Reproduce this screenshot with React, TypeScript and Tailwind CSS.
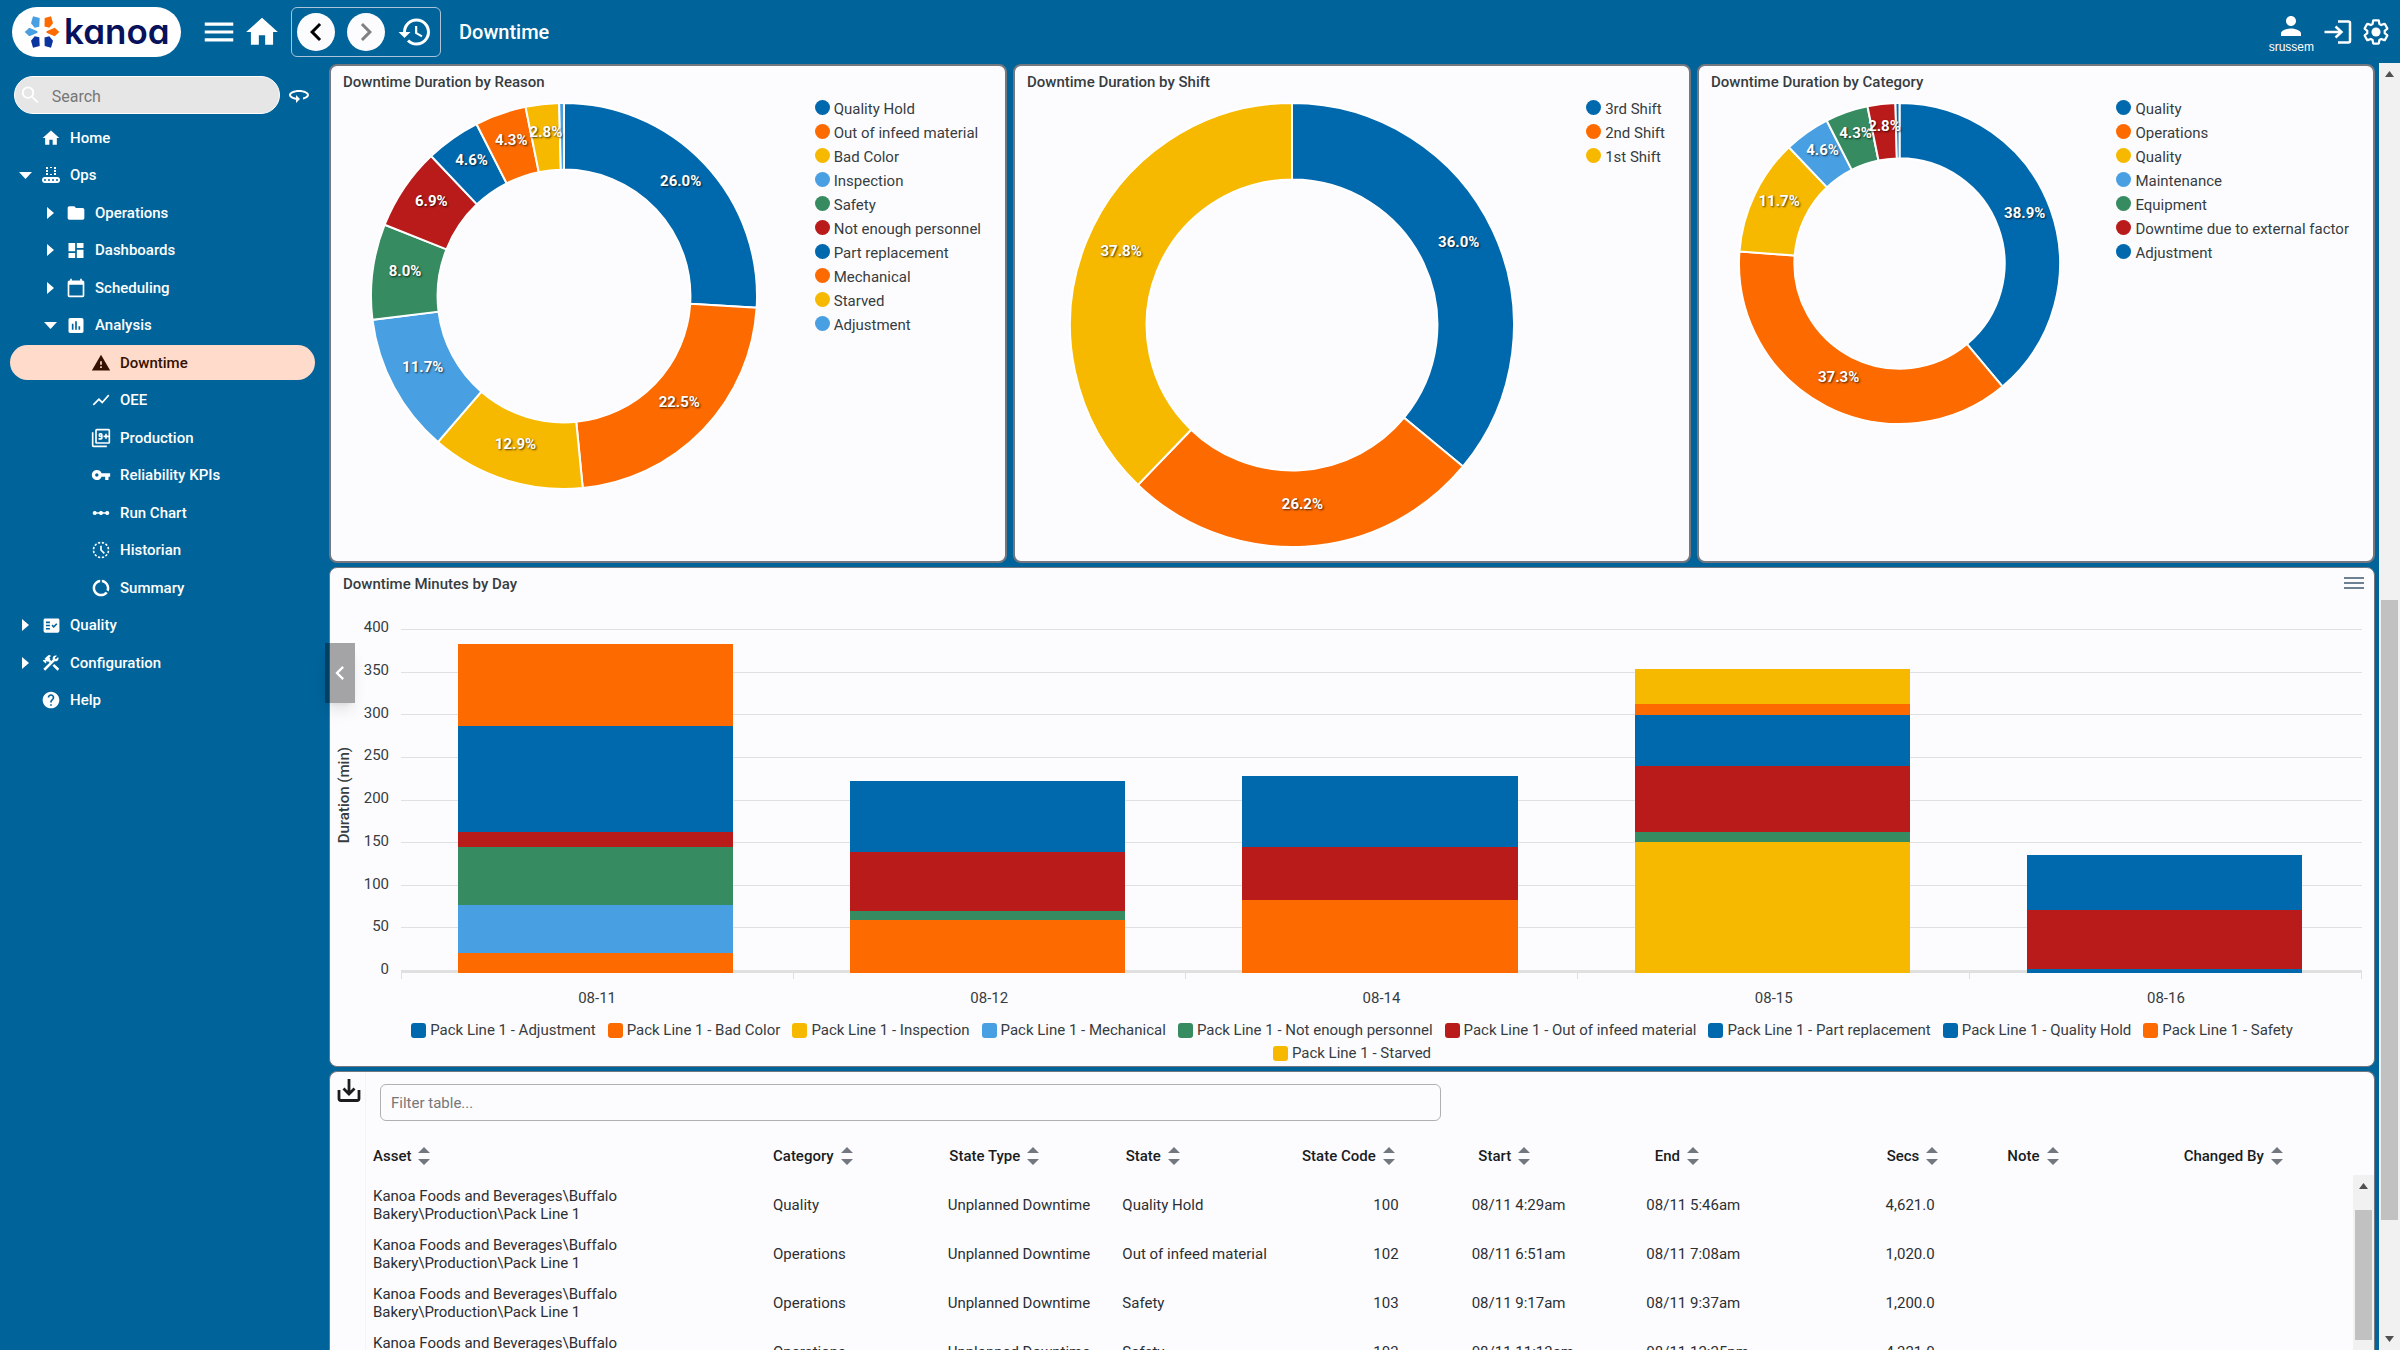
import React, { useState } from "react";
import {
  Md360,
  MdAssessment,
  MdCalendarToday,
  MdChevronLeft,
  MdConstruction,
  MdDashboard,
  MdDataUsage,
  MdFactCheck,
  MdFolder,
  MdHelp,
  MdHistory,
  MdHistoryToggleOff,
  MdHome,
  MdLinearScale,
  MdMenu,
  MdOutlineFilter9Plus,
  MdPerson,
  MdSearch,
  MdShowChart,
  MdVpnKey,
  MdWarning,
} from "react-icons/md";

const BLUE = "#0069ae";
const ORANGE = "#fc6a00";
const YELLOW = "#f7b900";
const SKY = "#489fe2";
const GREEN = "#368b61";
const RED = "#b91a1a";

interface Slice {
  label: string;
  value: number;
  color: string;
}

const reasons: Slice[] = [
  { label: "Quality Hold", value: 26.0, color: BLUE },
  { label: "Out of infeed material", value: 22.5, color: ORANGE },
  { label: "Bad Color", value: 12.9, color: YELLOW },
  { label: "Inspection", value: 11.7, color: SKY },
  { label: "Safety", value: 8.0, color: GREEN },
  { label: "Not enough personnel", value: 6.9, color: RED },
  { label: "Part replacement", value: 4.6, color: BLUE },
  { label: "Mechanical", value: 4.3, color: ORANGE },
  { label: "Starved", value: 2.8, color: YELLOW },
  { label: "Adjustment", value: 0.4, color: SKY },
];

const shifts: Slice[] = [
  { label: "3rd Shift", value: 36.0, color: BLUE },
  { label: "2nd Shift", value: 26.2, color: ORANGE },
  { label: "1st Shift", value: 37.8, color: YELLOW },
];

const categories: Slice[] = [
  { label: "Quality", value: 38.9, color: BLUE },
  { label: "Operations", value: 37.3, color: ORANGE },
  { label: "Quality", value: 11.7, color: YELLOW },
  { label: "Maintenance", value: 4.6, color: SKY },
  { label: "Equipment", value: 4.3, color: GREEN },
  { label: "Downtime due to external factor", value: 2.8, color: RED },
  { label: "Adjustment", value: 0.4, color: BLUE },
];

// minutes per day, top segment first
const days = [
  {
    day: "08-11",
    parts: [
      [ORANGE, 96.3],
      [BLUE, 123.2],
      [RED, 17.3],
      [GREEN, 67.6],
      [SKY, 56.6],
      [ORANGE, 22.9],
    ],
  },
  {
    day: "08-12",
    parts: [
      [BLUE, 83.2],
      [RED, 68.8],
      [GREEN, 10.5],
      [ORANGE, 62],
    ],
  },
  {
    day: "08-14",
    parts: [
      [BLUE, 82.5],
      [RED, 62.4],
      [ORANGE, 85],
    ],
  },
  {
    day: "08-15",
    parts: [
      [YELLOW, 40.8],
      [ORANGE, 12.8],
      [BLUE, 59.1],
      [RED, 77.3],
      [GREEN, 11.3],
      [YELLOW, 153],
    ],
  },
  {
    day: "08-16",
    parts: [
      [BLUE, 63.8],
      [RED, 69.1],
      [BLUE, 4.7],
    ],
  },
] as { day: string; parts: [string, number][] }[];

const series = [
  ["Adjustment", BLUE],
  ["Bad Color", ORANGE],
  ["Inspection", YELLOW],
  ["Mechanical", SKY],
  ["Not enough personnel", GREEN],
  ["Out of infeed material", RED],
  ["Part replacement", BLUE],
  ["Quality Hold", BLUE],
  ["Safety", ORANGE],
  ["Starved", YELLOW],
];

const ticks = [400, 350, 300, 250, 200, 150, 100, 50, 0];

const columns = [
  "Asset",
  "Category",
  "State Type",
  "State",
  "State Code",
  "Start",
  "End",
  "Secs",
  "Note",
  "Changed By",
];

const asset = "Kanoa Foods and Beverages\\Buffalo Bakery\\Production\\Pack Line 1";

const rows = [
  [asset, "Quality", "Unplanned Downtime", "Quality Hold", "100", "08/11 4:29am", "08/11 5:46am", "4,621.0", "", ""],
  [asset, "Operations", "Unplanned Downtime", "Out of infeed material", "102", "08/11 6:51am", "08/11 7:08am", "1,020.0", "", ""],
  [asset, "Operations", "Unplanned Downtime", "Safety", "103", "08/11 9:17am", "08/11 9:37am", "1,200.0", "", ""],
  [asset, "Operations", "Unplanned Downtime", "Safety", "103", "08/11 11:13am", "08/11 12:25pm", "4,321.0", "", ""],
];

const ConveyorIcon = () => (
  <svg width="18" height="18" viewBox="0 0 18 18" fill="currentColor">
    <path d="M4 1h2v2H4zM8 1h2v1H8zM12 1h2v2h-2zM4 4h2v2H4zM12 4h2v2h-2zM4 7h2v2H4zM8 8h2v1H8zM12 7h2v2h-2z" />
    <path
      fillRule="evenodd"
      d="M3 11h12a3 3 0 0 1 0 6H3a3 3 0 0 1 0-6zm0 2a1 1 0 1 0 0 2 1 1 0 0 0 0-2zm4 0a1 1 0 1 0 0 2 1 1 0 0 0 0-2zm4 0a1 1 0 1 0 0 2 1 1 0 0 0 0-2zm4 0a1 1 0 1 0 0 2 1 1 0 0 0 0-2z"
    />
  </svg>
);

const GearIcon = () => (
  <svg width="28" height="28" viewBox="0 0 24 24" fill="none">
    <path
      stroke="currentColor"
      strokeWidth="1.9"
      strokeLinejoin="round"
      d="M19.43 12.98c.04-.32.07-.64.07-.98s-.03-.66-.07-.98l2.11-1.65c.19-.15.24-.42.12-.64l-2-3.46c-.09-.16-.26-.25-.44-.25-.06 0-.12.01-.17.03l-2.49 1c-.52-.4-1.08-.73-1.69-.98l-.38-2.65C14.46 2.18 14.25 2 14 2h-4c-.25 0-.46.18-.49.42l-.38 2.65c-.61.25-1.17.59-1.69.98l-2.49-1c-.06-.02-.12-.03-.18-.03-.17 0-.34.09-.43.25l-2 3.46c-.13.22-.07.49.12.64l2.11 1.65c-.04.32-.07.65-.07.98s.03.66.07.98l-2.11 1.65c-.19.15-.24.42-.12.64l2 3.46c.09.16.26.25.44.25.06 0 .12-.01.17-.03l2.49-1c.52.4 1.08.73 1.69.98l.38 2.65c.03.24.24.42.49.42h4c.25 0 .46-.18.49-.42l.38-2.65c.61-.25 1.17-.59 1.69-.98l2.49 1c.06.02.12.03.18.03.17 0 .34-.09.43-.25l2-3.46c.12-.22.07-.49-.12-.64l-2.11-1.65z"
    />
    <circle cx="12" cy="12" r="3.9" fill="currentColor" />
  </svg>
);

const menu = [
  { label: "Home", level: 0, icon: <MdHome size={20} /> },
  { label: "Ops", level: 0, caret: "down", icon: <ConveyorIcon /> },
  { label: "Operations", level: 1, caret: "right", icon: <MdFolder size={20} /> },
  { label: "Dashboards", level: 1, caret: "right", icon: <MdDashboard size={21} /> },
  { label: "Scheduling", level: 1, caret: "right", icon: <MdCalendarToday size={20} /> },
  { label: "Analysis", level: 1, caret: "down", icon: <MdAssessment size={21} /> },
  { label: "Downtime", level: 2, icon: <MdWarning size={20} /> },
  { label: "OEE", level: 2, icon: <MdShowChart size={20} /> },
  { label: "Production", level: 2, icon: <MdOutlineFilter9Plus size={20} /> },
  { label: "Reliability KPIs", level: 2, icon: <MdVpnKey size={20} /> },
  { label: "Run Chart", level: 2, icon: <MdLinearScale size={20} /> },
  { label: "Historian", level: 2, icon: <MdHistoryToggleOff size={20} /> },
  { label: "Summary", level: 2, icon: <MdDataUsage size={20} /> },
  { label: "Quality", level: 0, caret: "right", icon: <MdFactCheck size={19} /> },
  { label: "Configuration", level: 0, caret: "right", icon: <MdConstruction size={20} /> },
  { label: "Help", level: 0, icon: <MdHelp size={20} /> },
];

const indent = ["pl-[3px]", "pl-[28px]", "pl-[53px]"];

const Logo = () => (
  <a href="#" aria-label="kanoa" className="flex h-[50px] w-[169px] items-center gap-1 rounded-[25px] bg-white pl-3">
    <svg width="36" height="34" viewBox="-18 -17 36 34" className="shrink-0">
      <path d="M-9 -15.700L-2.300 -14L-2.700 -5.300L-7.300 -4.300L-11 -8.700Z" fill="#489fe2" />
      <path d="M9 -15.700L2.700 -14L2.500 -5.500L7.300 -4.300L11 -8.700Z" fill="#fc6a00" />
      <path d="M17.300 0L12.700 -4.300L4.500 -0.800L4.500 0.800L12.700 4.300Z" fill="#fc6a00" />
      <path d="M-17.300 0L-12.700 -4.300L-4.500 -0.800L-4.500 0.800L-12.700 4.300Z" fill="#489fe2" />
      <path d="M-9 15.700L-2.300 14L-2.700 5.300L-7.300 4.300L-11 8.700Z" fill="#0a35a0" />
      <path d="M9 15.700L2.700 14L2.500 5.500L7.300 4.300L11 8.700Z" fill="#0a35a0" />
    </svg>
    <span className="font-['Inter',sans-serif] text-[35px] leading-none font-semibold text-[#08125c] [font-feature-settings:'cv11']">
      kanoa
    </span>
  </a>
);

const TopBar = () => (
  <header className="flex h-[63px] shrink-0 items-center pl-3 pr-2.5">
    <Logo />
    <button type="button" aria-label="Menu" className="ml-[19px]">
      <MdMenu size={38} />
    </button>
    <button type="button" aria-label="Home" className="ml-[5px]">
      <MdHome size={38} />
    </button>
    <div className="ml-2.5 flex h-[50px] w-[150px] items-center justify-between rounded-md border border-[#a9c3d8] pl-[5px] pr-[7px]">
      <button
        type="button"
        aria-label="Back"
        className="flex size-[38px] items-center justify-center rounded-full bg-[#fcfcff] text-black"
      >
        <MdChevronLeft size={36} />
      </button>
      <button
        type="button"
        aria-label="Forward"
        className="flex size-[38px] items-center justify-center rounded-full bg-[#fcfcff] text-[#808080]"
      >
        <MdChevronLeft size={36} className="rotate-180" />
      </button>
      <button type="button" aria-label="History">
        <MdHistory size={36} />
      </button>
    </div>
    <h1 className="ml-[18px] text-xl font-medium">Downtime</h1>
    <div className="ml-auto flex items-center">
      <div className="mr-2.5 flex flex-col items-center">
        <MdPerson size={30} />
        <span className="font-['Liberation_Sans',sans-serif] text-xs leading-3">srussem</span>
      </div>
      <button type="button" aria-label="Sign out">
        <svg width="28" height="26" viewBox="0 0 28 26" fill="none" stroke="currentColor" strokeWidth="2.5">
          <path d="M14 2.5h10.5q1.5 0 1.5 1.5v18q0 1.5-1.5 1.5H14" />
          <path d="M0.5 13H17M11.5 7.5L17.5 13L11.5 18.5" />
        </svg>
      </button>
      <button type="button" aria-label="Settings" className="ml-2.5">
        <GearIcon />
      </button>
    </div>
  </header>
);

const Sidebar = () => {
  const [active, setActive] = useState("Downtime");
  return (
    <aside className="w-[325px] shrink-0">
      <div className="flex items-center gap-[7px] pl-3.5 pt-[13px]">
        <label className="flex h-[38px] w-[266px] items-center rounded-full border border-white bg-[#e6e6e6] pl-1">
          <MdSearch size={26} className="text-white" />
          <input
            type="text"
            aria-label="Search"
            placeholder="Search"
            className="ml-2.5 w-full bg-transparent pt-1 text-base text-gray-700 outline-none placeholder:text-[#777]"
          />
        </label>
        <button type="button" aria-label="Reset menu">
          <Md360 size={24} />
        </button>
      </div>
      <ul className="mt-[5px] grid h-[600px] auto-rows-fr px-2.5">
        {menu.map((item) => (
          <li key={item.label} className="flex items-center">
            <button
              type="button"
              onClick={() => setActive(item.label)}
              className={`flex h-[35px] w-full items-center rounded-full text-[15px] font-medium ${indent[item.level]} ${
                active === item.label ? "bg-[#ffdbcb] text-[#341100]" : ""
              }`}
            >
              <span className="flex w-6 justify-center">
                {item.caret === "down" && (
                  <svg width="13" height="7" fill="currentColor">
                    <path d="M0 0h13L6.5 7z" />
                  </svg>
                )}
                {item.caret === "right" && (
                  <svg width="7" height="12" fill="currentColor">
                    <path d="M0 0v12l7-6z" />
                  </svg>
                )}
              </span>
              <span className="ml-1 flex w-5 justify-center">{item.icon}</span>
              <span className="ml-[9px]">{item.label}</span>
            </button>
          </li>
        ))}
      </ul>
    </aside>
  );
};

const Donut = ({ data, size }: { data: Slice[]; size: number }) => {
  const r = size / 2;
  const inner = r * 0.655;
  const mid = r * 0.83;
  const total = data.reduce((sum, d) => sum + d.value, 0);
  const at = (frac: number, radius: number) => {
    const a = frac * Math.PI * 2;
    return [r + Math.sin(a) * radius, r - Math.cos(a) * radius];
  };
  let acc = 0;
  const slices = data.map((d) => {
    const start = acc / total;
    acc += d.value;
    const end = acc / total;
    return { ...d, start, end };
  });
  return (
    <svg width={size} height={size} viewBox={`0 0 ${size} ${size}`} className="max-w-full overflow-visible">
      {slices.map((s, i) => {
        const [x0, y0] = at(s.start, r);
        const [x1, y1] = at(s.end, r);
        const [x2, y2] = at(s.end, inner);
        const [x3, y3] = at(s.start, inner);
        const big = s.end - s.start > 0.5 ? 1 : 0;
        return (
          <path
            key={i}
            d={`M${x0} ${y0}A${r} ${r} 0 ${big} 1 ${x1} ${y1}L${x2} ${y2}A${inner} ${inner} 0 ${big} 0 ${x3} ${y3}Z`}
            fill={s.color}
            stroke="#fff"
            strokeWidth="2"
          />
        );
      })}
      {slices
        .filter((s) => s.value > 1)
        .map((s, i) => {
          const [x, y] = at((s.start + s.end) / 2, mid);
          return (
            <text
              key={i}
              x={x}
              y={y}
              textAnchor="middle"
              fill="#fff"
              className="text-[15px] font-bold [text-shadow:1px_1px_2px_rgba(0,0,0,0.7)]"
            >
              {s.value.toFixed(1)}%
            </text>
          );
        })}
    </svg>
  );
};

const DonutCard = ({ title, data, size }: { title: string; data: Slice[]; size: number }) => (
  <section className="flex h-[499px] min-w-0 flex-1 flex-col rounded-lg border-2 border-[#73777f] bg-[#fcfcff] text-[#373d3f]">
    <h2 className="pl-3 pt-1.5 text-[15px] leading-5 font-medium">{title}</h2>
    <div className="flex">
      <div className="flex min-w-0 flex-1 justify-center pr-[17px] pt-[11px]">
        <Donut data={data} size={size} />
      </div>
      <ul className="pr-6 pt-[5px]">
        {data.map((d, i) => (
          <li key={i} className="flex h-6 items-center gap-1 text-[15px]">
            <span className="mb-1 size-[15px] rounded-full" style={{ backgroundColor: d.color }} />
            {d.label}
          </li>
        ))}
      </ul>
    </div>
  </section>
);

const BarCard = () => (
  <section className="rounded-lg border border-[#73777f] bg-[#fcfcff] text-[#373d3f]">
    <div className="flex h-[30px] items-center justify-between pl-[13px] pr-2.5">
      <h2 className="pt-0.5 text-[15px] font-medium">Downtime Minutes by Day</h2>
      <button type="button" aria-label="Chart menu" className="flex w-5 flex-col gap-[3px]">
        <span className="h-0.5 bg-[#6e8192]" />
        <span className="h-0.5 bg-[#6e8192]" />
        <span className="h-0.5 bg-[#6e8192]" />
      </button>
    </div>
    <div className="flex pt-[31px] pr-3">
      <div className="flex h-[332px] w-[27px] items-center justify-center pl-0.5">
        <span className="rotate-180 text-[15px] font-medium whitespace-nowrap [writing-mode:vertical-rl]">
          Duration (min)
        </span>
      </div>
      <div className="-mt-[11px] flex h-[360px] w-8 flex-col justify-between text-right text-[15px]">
        {ticks.map((t) => (
          <span key={t} className="leading-[18px]">
            {t}
          </span>
        ))}
      </div>
      <div className="ml-3 flex-1">
        <div className="relative h-[344px] border-b-2 border-[#e0e0e0]">
          <div className="absolute inset-0 flex flex-col justify-between">
            {ticks.map((t) => (
              <div key={t} className="h-px bg-[#e0e0e0]" />
            ))}
          </div>
          <div className="relative flex h-[344px]">
            {days.map((d) => (
              <div key={d.day} className="flex flex-1 flex-col justify-end pl-[57px] pr-[60px]">
                {d.parts.map(([color, mins], i) => (
                  <div key={i} style={{ backgroundColor: color, height: `${mins * 0.2492}%` }} />
                ))}
              </div>
            ))}
          </div>
        </div>
        <div className="flex h-[6px] border-r border-[#e0e0e0]">
          {days.map((d) => (
            <div key={d.day} className="flex-1 border-l border-[#e0e0e0]" />
          ))}
        </div>
        <div className="flex pt-[7px]">
          {days.map((d) => (
            <span key={d.day} className="flex-1 text-center text-[15px] leading-6">
              {d.day}
            </span>
          ))}
        </div>
      </div>
    </div>
    <ul className="flex flex-wrap justify-center gap-x-3 px-8 pt-[9px] pb-px">
      {series.map(([name, color]) => (
        <li key={name} className="flex h-[23px] items-center gap-1 text-[15px]">
          <span className="size-[15px] rounded-[3px]" style={{ backgroundColor: color }} />
          Pack Line 1 - {name}
        </li>
      ))}
    </ul>
  </section>
);

const SortIcon = () => (
  <svg width="12" height="20" viewBox="0 0 12 20" fill="#73777f">
    <path d="M6 1l6 6H0zM6 19l6-6H0z" />
  </svg>
);

const headAlign: Record<string, string> = { Secs: "justify-end pr-[62px]" };
const cellAlign: Record<string, string> = {
  Asset: "pl-[7px] pr-32",
  "State Code": "text-right pr-[66px]",
  Secs: "text-right pr-[54px]",
};

const ScrollBar = ({ className, children }: { className: string; children: React.ReactNode }) => (
  <div className={`flex w-[21px] shrink-0 flex-col items-center bg-[#f1f1f1] ${className}`}>{children}</div>
);

const TableCard = () => {
  const [filter, setFilter] = useState("");
  const shown = rows.filter((r) => r.join(" ").toLowerCase().includes(filter.toLowerCase()));
  return (
    <section className="flex min-h-0 flex-1 overflow-hidden rounded-t-lg border border-b-0 border-[#73777f] bg-[#fcfcff] text-[#1a1c1e]">
      <div className="w-9 shrink-0 border-r border-[#f4f4f7] pl-[7px] pt-[7px]">
        <button type="button" aria-label="Download">
          <svg width="24" height="24" viewBox="0 0 24 24" fill="none" stroke="#1a1c1e" strokeWidth="2.8">
            <path d="M2 11v8.500q0 2 2 2h16q2 0 2-2v-8.500" />
            <path d="M12 0v15M6.500 9.500l5.500 5.500l5.500-5.500" />
          </svg>
        </button>
      </div>
      <div className="flex min-w-0 flex-1 flex-col">
        <div className="pl-[14px] pt-3">
          <input
            type="text"
            aria-label="Filter table"
            placeholder="Filter table..."
            value={filter}
            onChange={(e) => setFilter(e.target.value)}
            className="block h-[37px] w-[1061px] max-w-full rounded-md border border-[#b0b0b4] bg-transparent px-2.5 text-[15px] outline-none placeholder:text-[#777]"
          />
        </div>
        <table className="mt-3.5 flex min-h-0 flex-1 flex-col text-[15px]">
          <thead className="block pr-[21px]">
            <tr className="grid h-[42px] grid-cols-[400px_repeat(9,1fr)] items-center">
              {columns.map((c) => (
                <th
                  key={c}
                  className={`flex items-center gap-[7px] font-medium whitespace-nowrap ${headAlign[c] || "pl-[7px]"}`}
                >
                  {c}
                  <SortIcon />
                </th>
              ))}
            </tr>
          </thead>
          <tbody className="flex min-h-0 flex-1 flex-col overflow-hidden pr-9 pt-[3px] text-[#2c2f33]">
            {shown.map((r, n) => (
              <tr key={n} className="grid h-[49px] shrink-0 grid-cols-[400px_repeat(9,1fr)] items-center">
                {r.map((cell, i) => (
                  <td key={i} className={`leading-[18px] ${cellAlign[columns[i]] || "pl-[7px] whitespace-nowrap"}`}>
                    {cell}
                  </td>
                ))}
              </tr>
            ))}
          </tbody>
        </table>
      </div>
      <ScrollBar className="-ml-[21px] mt-[103px] pt-2">
        <svg width="9" height="6" fill="#505050">
          <path d="M0 6h9L4.500 0z" />
        </svg>
        <div className="mt-[21px] h-[130px] w-[17px] bg-[#c1c1c1]" />
      </ScrollBar>
    </section>
  );
};

export default function App() {
  return (
    <div className="relative flex h-screen flex-col overflow-hidden bg-[#006399] font-['Roboto',sans-serif] text-white">
      <TopBar />
      <div className="flex min-h-0 flex-1">
        <Sidebar />
        <main className="flex min-w-0 flex-1 flex-col gap-1 px-1 pt-px">
          <div className="flex gap-1.5">
            <DonutCard title="Downtime Duration by Reason" data={reasons} size={386} />
            <DonutCard title="Downtime Duration by Shift" data={shifts} size={444} />
            <DonutCard title="Downtime Duration by Category" data={categories} size={321} />
          </div>
          <BarCard />
          <TableCard />
        </main>
        <ScrollBar className="pt-2">
          <svg width="9" height="6" fill="#505050">
            <path d="M0 6h9L4.500 0z" />
          </svg>
          <div className="mt-[523px] h-[620px] w-[17px] bg-[#c1c1c1]" />
          <svg width="9" height="6" fill="#505050" className="mt-auto mb-2">
            <path d="M0 0h9L4.500 6z" />
          </svg>
        </ScrollBar>
      </div>
      <button
        type="button"
        aria-label="Collapse menu"
        className="absolute left-[325px] top-[643px] flex h-[60px] w-[30px] items-center justify-center bg-black/35 shadow-lg"
      >
        <MdChevronLeft size={28} />
      </button>
    </div>
  );
}
